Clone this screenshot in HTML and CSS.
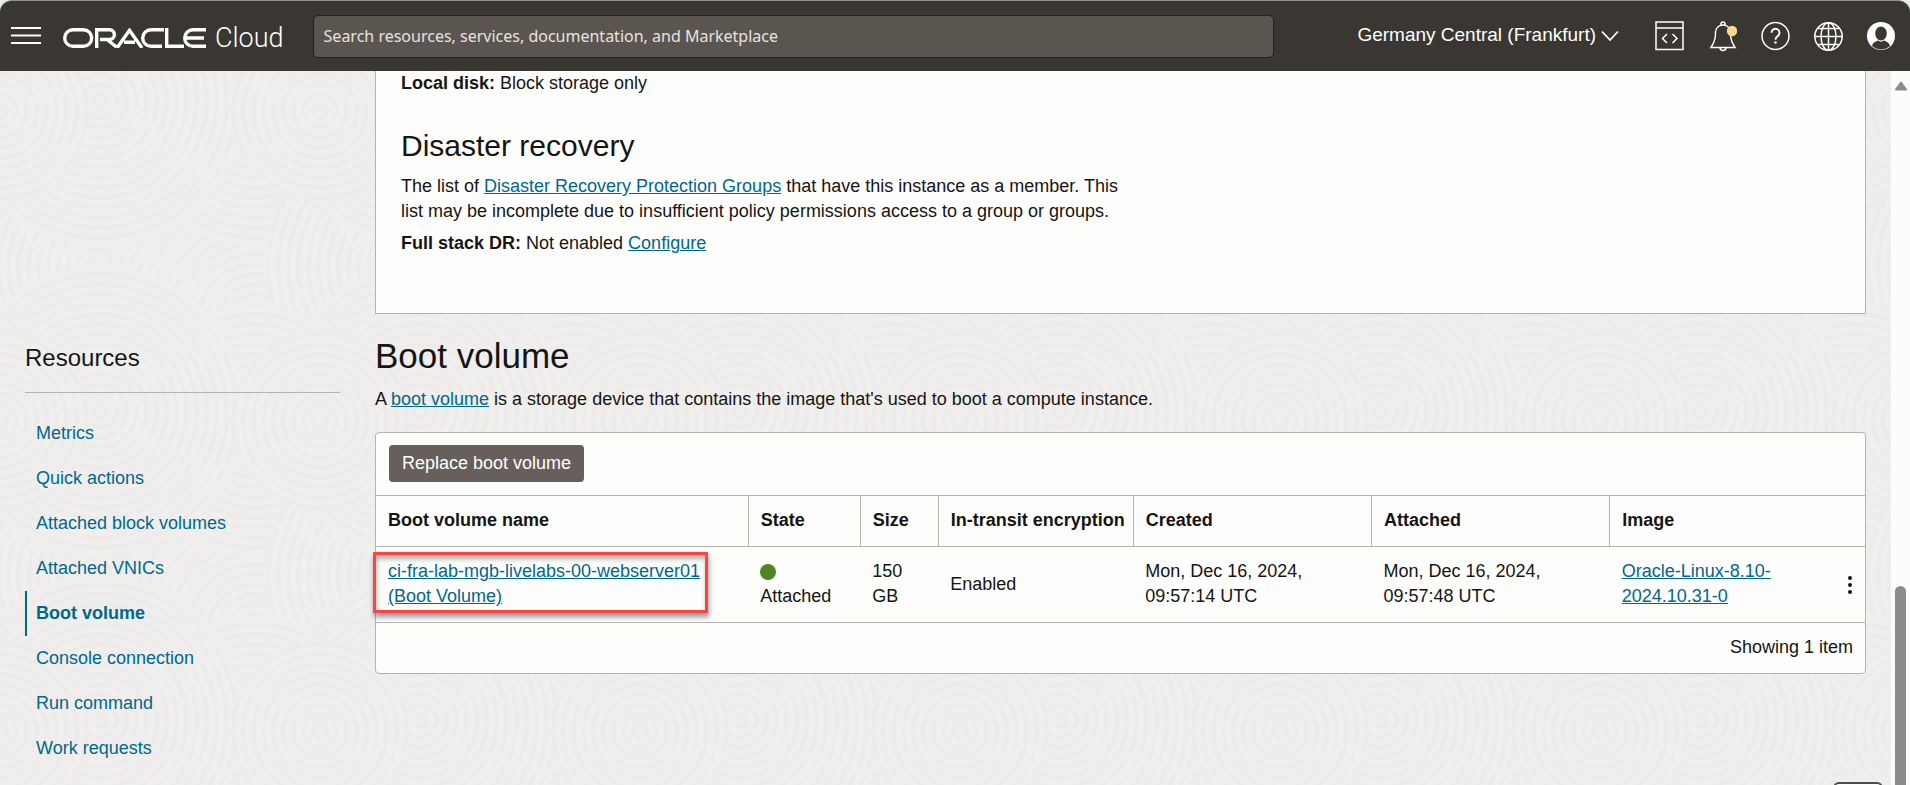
FILE: index.html
```html
<!DOCTYPE html>
<html lang="en">
<head>
<meta charset="utf-8">
<meta name="viewport" content="width=device-width, initial-scale=1">
<title>Boot volume - Oracle Cloud</title>
<link rel="stylesheet" href="styles.css">
</head>
<body>
<header class="topbar">
  <button class="icon-btn" type="button" aria-label="Navigation menu">
    <svg width="30" height="20" viewBox="0 0 30 20" fill="none" stroke="#fff" stroke-width="2.200"><path d="M0 2h30M0 9.500h30M0 17h30"/></svg>
  </button>
  <a class="brand" href="#" aria-label="Oracle Cloud">
    <svg width="144" height="20" viewBox="0 0 144 20" fill="none" stroke="#fff" stroke-width="3.400" aria-hidden="true">
      <rect x="1.700" y="1.700" width="27" height="16.600" rx="8.300"/>
      <path d="M33.700 20V1.700H46.500a4.900 4.900 0 0 1 0 9.800H37M44 11.500L53.500 19"/>
      <path d="M54 20L66.500 2.300L79 20M61 14.300h11"/>
      <path d="M101 1.700H88a8.300 8.300 0 0 0 0 16.600H99"/>
      <path d="M103.700 0V18.300H121"/>
      <path d="M143 1.700H130a8.300 8.300 0 0 0 0 16.600H143M122.500 10H141"/>
    </svg>
    <span class="brand-cloud">Cloud</span>
  </a>
  <input class="search" type="search" aria-label="Search" placeholder="Search resources, services, documentation, and Marketplace">
  <div class="tools">
    <button class="region" type="button">Germany Central (Frankfurt)
      <svg width="18" height="12" viewBox="0 0 18 12" fill="none" stroke="#fff" stroke-width="1.800"><path d="M1 1.500l8 8.500 8-8.500"/></svg>
    </button>
    <button class="icon-btn" type="button" aria-label="Developer tools">
      <svg width="30" height="32" viewBox="0 0 30 32" fill="none" stroke="#fff" stroke-width="1.500"><path d="M2 2h27v27.500h-27zM2 8h27M13 14l-4.500 4.500L13 23M18.500 14l4.500 4.500L18.500 23"/></svg>
    </button>
    <button class="icon-btn" type="button" aria-label="Announcements">
      <svg width="30" height="32" viewBox="0 0 30 32" fill="none" stroke="#fff" stroke-width="1.500"><path d="M4 27.500h24c-2-3-3.800-6-4.300-10.500L23.500 12.500c-.3-4.700-3.500-7.500-7.500-7.500s-7.200 2.800-7.500 7.500L8.300 17C7.800 21.500 6 24.500 4 27.500zM14 5V4a2 2 0 0 1 4 0V5M13 27.500a3 3 0 0 0 6 0"/><circle cx="25" cy="11" r="5.200" fill="#f5d98f" stroke="none"/></svg>
    </button>
    <button class="icon-btn" type="button" aria-label="Help">
      <svg width="30" height="32" viewBox="0 0 30 32" fill="none" stroke="#fff" stroke-width="1.500"><circle cx="15.500" cy="16" r="13.500"/><path d="M11.500 12.800a4 4 0 1 1 6.200 3.300c-1.700 1.100-2.200 1.800-2.200 3.700" stroke-width="1.900"/><circle cx="15.500" cy="22.500" r="1.200" fill="#fff" stroke="none"/></svg>
    </button>
    <button class="icon-btn" type="button" aria-label="Language">
      <svg width="30" height="32" viewBox="0 0 30 32" fill="none" stroke="#fff" stroke-width="1.500"><circle cx="15.500" cy="16.500" r="13.700"/><ellipse cx="15.500" cy="16.500" rx="7.500" ry="13.700"/><path d="M15.500 3v27M2 16.500h27M5 8.500h21M5 24.500h21"/></svg>
    </button>
    <button class="icon-btn" type="button" aria-label="Profile">
      <svg width="30" height="32" viewBox="0 0 30 32"><circle cx="15" cy="16" r="14" fill="#fff"/><ellipse cx="15" cy="13.500" rx="5.800" ry="7" fill="#3a3631"/><path d="M6 26c1-4 4-4.500 6-5.500 2 1.500 4 1.500 6 0 2 1 5 1.500 6 5.500a13.500 13.500 0 0 1-18 0z" fill="#3a3631"/></svg>
    </button>
  </div>
</header>
<div class="viewport">
  <div class="page">
    <aside class="sidebar">
      <h2 class="sidebar-title">Resources</h2>
      <nav class="nav" aria-label="Resources">
        <a href="#">Metrics</a>
        <a href="#">Quick actions</a>
        <a href="#">Attached block volumes</a>
        <a href="#">Attached VNICs</a>
        <a class="active" href="#" aria-current="page">Boot volume</a>
        <a href="#">Console connection</a>
        <a href="#">Run command</a>
        <a href="#">Work requests</a>
      </nav>
    </aside>
    <main class="main">
      <section class="details">
        <p><b>Local disk:</b> Block storage only</p>
        <h2 class="details-title">Disaster recovery</h2>
        <p class="details-text">The list of <a href="#">Disaster Recovery Protection Groups</a> that have this instance as a member. This list may be incomplete due to insufficient policy permissions access to a group or groups.</p>
        <p><b>Full stack DR:</b> Not enabled <a href="#">Configure</a></p>
      </section>
      <h1 class="title">Boot volume</h1>
      <p class="intro">A <a href="#">boot volume</a> is a storage device that contains the image that's used to boot a compute instance.</p>
      <section class="card">
        <div class="card-tools"><button class="replace" type="button">Replace boot volume</button></div>
        <table class="volumes">
          <colgroup><col class="c-name"><col class="c-state"><col class="c-size"><col class="c-enc"><col class="c-date"><col class="c-date"><col class="c-image"><col class="c-menu"></colgroup>
          <thead>
            <tr><th>Boot volume name</th><th>State</th><th>Size</th><th>In-transit encryption</th><th>Created</th><th>Attached</th><th colspan="2">Image</th></tr>
          </thead>
          <tbody>
            <tr>
              <td class="marked"><a href="#">ci-fra-lab-mgb-livelabs-00-webserver01 (Boot Volume)</a></td>
              <td><span class="dot"></span>Attached</td>
              <td>150 GB</td>
              <td>Enabled</td>
              <td>Mon, Dec 16, 2024, 09:57:14 UTC</td>
              <td>Mon, Dec 16, 2024, 09:57:48 UTC</td>
              <td><a href="#">Oracle-Linux-8.10-2024.10.31-0</a></td>
              <td class="menu-cell"><button class="row-menu" type="button" aria-label="Row actions"><svg width="6" height="20" viewBox="0 0 6 20" fill="#161513"><circle cx="3" cy="3" r="2"/><circle cx="3" cy="10" r="2"/><circle cx="3" cy="17" r="2"/></svg></button></td>
            </tr>
          </tbody>
        </table>
        <p class="count">Showing 1 item</p>
      </section>
    </main>
  </div>
  <div class="scrollbar" aria-hidden="true">
    <svg width="14" height="10" viewBox="0 0 14 10"><path d="M7 1.500L12 8.500H2z" fill="#8b8b8b" stroke="#8b8b8b" stroke-width="2" stroke-linejoin="round"/></svg>
    <div class="thumb"></div>
  </div>
</div>
<button class="help" type="button" aria-label="Support"></button>
</body>
</html>
```
FILE: styles.css
```css
* { box-sizing: border-box; }
body {
  margin: 0;
  height: 100vh;
  overflow: hidden;
  display: flex;
  flex-direction: column;
  background: #e9ebeb;
  color: #161513;
  font: 18px/25px "Liberation Sans", Arial, sans-serif;
}
h1, h2, p { margin: 0; font-weight: 400; }
button { font: inherit; cursor: pointer; }
a { color: #00688c; }

.topbar {
  flex: none;
  height: 71px;
  display: flex;
  align-items: center;
  padding: 0 14px 0 11px;
  background: #3a3631;
  border-top: 1px solid #8d9391;
  border-radius: 12px 12px 0 0;
}
.icon-btn { display: flex; padding: 0; border: 0; background: none; }
.brand { display: flex; align-items: center; gap: 8px; margin: 4px 0 0 22px; color: #fff; text-decoration: none; }
.brand-cloud { font: 300 27px/40px Roboto, "Open Sans", sans-serif; }
.search {
  flex: 0 1 961px;
  height: 43px;
  margin-left: 29px;
  padding: 0 10px;
  border: 1px solid #24211e;
  border-radius: 5px;
  background: #5b554f;
  color: #fff;
  font: 16px/25px "Noto Sans", sans-serif;
}
.search::placeholder { color: #e6e3e0; opacity: 1; }
.tools { display: flex; align-items: center; gap: 23px; margin-left: auto; }
.region {
  display: flex;
  align-items: center;
  gap: 5px;
  margin-right: 12px;
  padding: 0 0 4px;
  border: 0;
  background: none;
  color: #fff;
  font-size: 19px;
  white-space: nowrap;
}
.region svg { margin-top: 4px; }

.viewport {
  flex: 1;
  min-height: 0;
  display: flex;
  background: #f0eeec url("data:image/svg+xml,%3Csvg xmlns='http://www.w3.org/2000/svg' width='320' height='310'%3E%3Cdefs%3E%3CradialGradient id='g' gradientUnits='userSpaceOnUse' cx='0' cy='0' r='10' spreadMethod='repeat'%3E%3Cstop offset='0' stop-color='%23f0efed'/%3E%3Cstop offset='.35' stop-color='%23f0efed'/%3E%3Cstop offset='.65' stop-color='%23ecebe9'/%3E%3Cstop offset='1' stop-color='%23f0efed'/%3E%3C/radialGradient%3E%3Cg id='t' fill='url(%23g)'%3E%3Ccircle r='150' transform='translate(95 195)'/%3E%3Ccircle r='150' transform='translate(255 250)'/%3E%3Ccircle r='125' transform='translate(255 50)'/%3E%3Ccircle r='145' transform='translate(100 30)'/%3E%3Ccircle r='90' transform='translate(0 40)'/%3E%3C/g%3E%3C/defs%3E%3Cuse href='%23t' x='-320' y='-310'/%3E%3Cuse href='%23t' y='-310'/%3E%3Cuse href='%23t' x='320' y='-310'/%3E%3Cuse href='%23t' x='-320'/%3E%3Cuse href='%23t'/%3E%3Cuse href='%23t' x='320'/%3E%3Cuse href='%23t' x='-320' y='310'/%3E%3Cuse href='%23t' y='310'/%3E%3Cuse href='%23t' x='320' y='310'/%3E%3C/svg%3E");
}
.page {
  flex: 1;
  min-width: 0;
  display: grid;
  grid-template-columns: 315px minmax(0, 1fr);
  gap: 35px;
  padding: 0 25px;
  overflow: hidden;
}

.sidebar { padding-top: 271px; }
.sidebar-title { padding-bottom: 18px; border-bottom: 1px solid #b5b3b1; font-size: 24px; line-height: 32px; margin-bottom: 18px; }
.nav { display: flex; flex-direction: column; }
.nav a { padding: 10px 9px; border-left: 2px solid transparent; text-decoration: none; }
.nav .active { border-color: #00688c; font-weight: 700; }

.details {
  padding: 0 25px 57px;
  border: 1px solid #b5b3b1;
  border-top: 0;
  background: #fdfdfc;
}
.details-title { margin: 30px 0 8px; font-size: 30px; line-height: 40px; }
.details-text { max-width: 730px; margin-bottom: 7px; }
.title { margin-top: 21px; font-size: 35px; line-height: 42px; }
.intro { margin: 10px 0 20px; }

.card { border: 1px solid #b8b2ab; border-radius: 4px; background: #fdfdfc; }
.card-tools { padding: 12px 13px 13px; }
.replace {
  display: block;
  padding: 6px 13px;
  border: 0;
  border-radius: 4px;
  background: #665f5b;
  color: #fff;
}
.volumes { width: 100%; table-layout: fixed; border-collapse: collapse; }
.volumes th, .volumes td { padding: 12px 12px 13px; text-align: left; border-top: 1px solid #b8b2ab; }
.volumes th { white-space: nowrap; border-right: 1px solid #b8b2ab; }
.volumes th:last-child { border-right: 0; }
.volumes tbody tr { border-bottom: 1px solid #b8b2ab; }
.c-name { width: 25%; }
.c-state { width: 112px; }
.c-size { width: 78px; }
.c-enc { width: 195px; }
.c-date { width: 16%; }
.c-menu { width: 60px; }
.volumes .marked { position: relative; padding-right: 40px; }
.marked::after {
  content: "";
  position: absolute;
  inset: 5px 40px 9px -3px;
  border: 3px solid #fb4444;
  box-shadow: 1px 4px 5px rgba(0, 0, 0, .4), inset 1px 4px 5px rgba(0, 0, 0, .3);
  pointer-events: none;
}
.dot { display: block; width: 16px; height: 16px; margin: 5px 0 4px; border-radius: 50%; background: #4f8424; }
.volumes .menu-cell { text-align: right; }
.row-menu { display: inline-block; padding: 0; border: 0; background: none; line-height: 0; vertical-align: middle; }
.count { padding: 12px 12px 13px; text-align: right; }

.scrollbar {
  flex: none;
  width: 19px;
  display: flex;
  flex-direction: column;
  align-items: center;
  padding-top: 10px;
  background: #fcfcfc;
}
.thumb { flex: 1; width: 11px; margin-top: 495px; border-radius: 6px 6px 0 0; background: #8b8b8b; }
.help {
  position: fixed;
  right: 27px;
  bottom: -37px;
  width: 50px;
  height: 40px;
  border: 2px solid #4f4b47;
  border-radius: 6px;
  background: #fdfdfc;
}
```
